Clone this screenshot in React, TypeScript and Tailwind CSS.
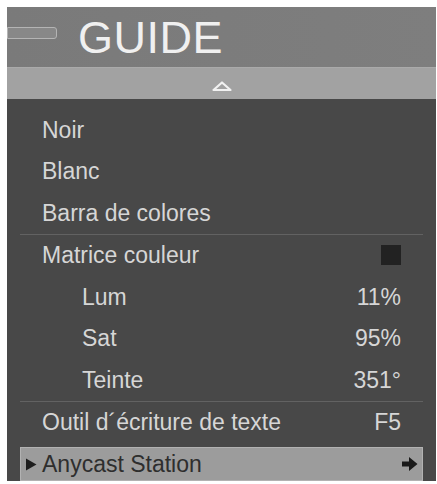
const font = { fontFamily: '"Liberation Sans", Arial, sans-serif' };

function Row({ label, value, indent, children }: { label: string; value?: string; indent?: boolean; children?: React.ReactNode }) {
  return (
    <div className={`h-[41.5px] flex items-center justify-between pr-[22px] ${indent ? 'pl-[62px]' : 'pl-[22px]'}`}>
      <span>{label}</span>
      {value && <span>{value}</span>}
      {children}
    </div>
  );
}

export default function App() {
  return (
    <div className="w-[437px] h-[484px] bg-white pt-[7px] pl-[7px] pr-[1px] pb-[3px]" style={font}>
      <div className="h-full flex flex-col">
        {/* Header */}
        <div className="h-[61px] bg-gradient-to-r from-[#7a7a7a] to-[#7e7e7e] flex items-center">
          <div className="w-[50px] h-[12px] border border-[#b4b4b4] rounded-r-[3px] bg-[#888] -mt-[8px]" />
          <span className="ml-[21px] text-[45px] leading-none text-[#f0f0f0] tracking-[0.5px]">GUIDE</span>
        </div>
        {/* Scroll up bar */}
        <div className="h-[32px] bg-[#a2a2a2] border-t border-[#aaa] flex items-center justify-center">
          <svg width="22" height="11" viewBox="0 0 22 11" className="mt-[5px]">
            <path d="M11 1.5 L19.5 9 L2.5 9 Z" fill="none" stroke="#f2f2f2" strokeWidth="2.2" strokeLinejoin="round" />
          </svg>
        </div>
        {/* Body */}
        <div className="flex-1 bg-[#484848] px-[13px] pt-[10px] text-[23px] text-[#d6d6d6]">
          <Row label="Noir" />
          <Row label="Blanc" />
          <Row label="Barra de colores" />
          <div className="border-t border-[#626262]" />
          <Row label="Matrice couleur">
            <div className="w-[20px] h-[20px] bg-[#222]" />
          </Row>
          <Row label="Lum" value="11%" indent />
          <Row label="Sat" value="95%" indent />
          <Row label="Teinte" value="351°" indent />
          <div className="border-t border-[#626262]" />
          <Row label="Outil d´écriture de texte" value="F5" />
          <div className="mt-[4px] h-[34px] bg-[#9c9c9c] border border-[#b2b2b2] flex items-center justify-between pl-[4px] pr-[4px] text-[#2e2e2e]">
            <span className="flex items-center">
              <svg width="12" height="13" viewBox="0 0 12 13" className="mr-[5px]">
                <path d="M1 0.5 L11.5 6.5 L1 12.5 Z" fill="#1e1e1e" />
              </svg>
              Anycast Station
            </span>
            <svg width="17" height="16" viewBox="0 0 17 16">
              <path d="M1 5.5 H8 V1 L16.5 8 L8 15 V10.5 H1 Z" fill="#1a1a1a" />
            </svg>
          </div>
        </div>
      </div>
    </div>
  );
}
